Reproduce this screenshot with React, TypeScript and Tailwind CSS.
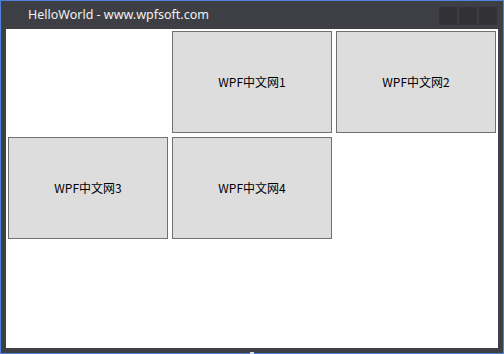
import React from 'react';

const items = ['WPF中文网1', 'WPF中文网2', 'WPF中文网3', 'WPF中文网4'];

export default function App() {
  return (
    <div className="relative w-[504px] h-[354px] border border-[#4f82da] bg-[#3e3f44] flex flex-col">
      {/* 标题栏 */}
      <div className="h-[28px] flex items-center pl-[27px] pr-[6px]">
        <span
          className="text-[12.5px] text-[#f1f1f1]"
          style={{ fontFamily: '"Noto Sans", "Noto Sans CJK SC", sans-serif' }}
        >
          HelloWorld - www.wpfsoft.com
        </span>
        <div className="ml-auto flex gap-[2px] mt-[6px] self-start">
          <div className="w-[18px] h-[18px] bg-[#323236]" />
          <div className="w-[18px] h-[18px] bg-[#323236]" />
          <div className="w-[18px] h-[18px] bg-[#323236]" />
        </div>
      </div>

      {/* 内容区 */}
      <div className="mx-[5px] mb-[5px] flex-1 bg-white grid grid-cols-3 grid-rows-[106px_106px_1fr]">
        <div />
        {items.map((t) => (
          <div key={t} className="p-[2px]">
            <div
              className="w-full h-full bg-[#dddddd] border border-[#707070] flex items-center justify-center text-[12px] text-black"
              style={{ fontFamily: '"Noto Sans CJK SC", "Noto Sans", sans-serif' }}
            >
              {t}
            </div>
          </div>
        ))}
      </div>

      <div className="absolute left-[249px] bottom-[-1px] w-[4px] h-[2px] bg-[#cfe0ff]" />
    </div>
  );
}
